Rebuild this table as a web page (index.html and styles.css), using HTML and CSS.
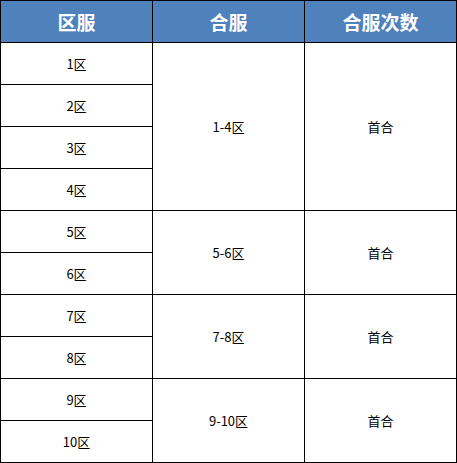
FILE: index.html
```html
<!DOCTYPE html>
<html lang="zh-CN">
<head>
<meta charset="utf-8">
<title>合服表</title>
<link rel="stylesheet" href="styles.css">
</head>
<body>
<div class="grid">
  <div class="cell head">区服</div>
  <div class="cell head">合服</div>
  <div class="cell head">合服次数</div>

  <div class="cell">1区</div>
  <div class="cell span4">1-4区</div>
  <div class="cell span4">首合</div>
  <div class="cell">2区</div>
  <div class="cell">3区</div>
  <div class="cell">4区</div>

  <div class="cell">5区</div>
  <div class="cell span2">5-6区</div>
  <div class="cell span2">首合</div>
  <div class="cell">6区</div>

  <div class="cell">7区</div>
  <div class="cell span2">7-8区</div>
  <div class="cell span2">首合</div>
  <div class="cell">8区</div>

  <div class="cell">9区</div>
  <div class="cell span2">9-10区</div>
  <div class="cell span2">首合</div>
  <div class="cell">10区</div>
</div>
</body>
</html>
```
FILE: styles.css
```css
html, body {
  margin: 0;
  padding: 0;
  background: #ffffff;
}

.grid {
  display: grid;
  grid-template-columns: 151px 151px 151px;
  grid-auto-rows: 41px;
  gap: 1px;
  padding: 1px;
  width: 457px;
  box-sizing: border-box;
  background: #000000;
}

.cell {
  background: #ffffff;
  display: flex;
  align-items: center;
  justify-content: center;
  font-family: "Noto Sans CJK SC", "Liberation Sans", sans-serif;
  font-size: 13px;
  color: #000000;
}

.head {
  background: #4f81bd;
  color: #ffffff;
  font-size: 19px;
  font-weight: bold;
}

.span4 {
  grid-row: span 4;
}

.span2 {
  grid-row: span 2;
}
```
